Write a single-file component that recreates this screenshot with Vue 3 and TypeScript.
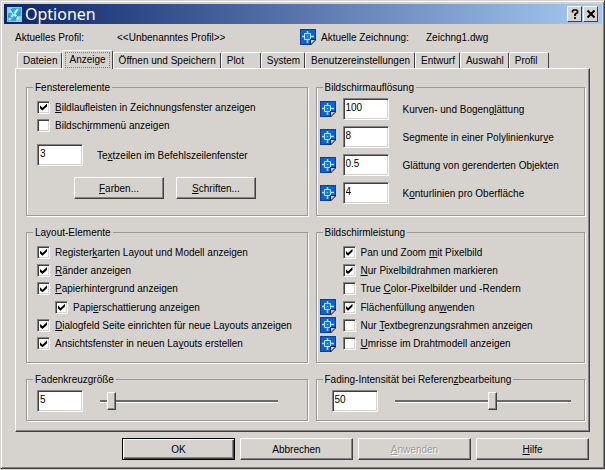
<script setup lang="ts">
import { h, ref, type FunctionalComponent } from 'vue'

interface CheckItem {
  id: string
  text: string
  checked: boolean
  nested?: boolean
  drawing?: boolean
}

interface NumberItem {
  id: string
  text: string
  value: string
}

/* Renders a caption; the letter after "&" is the underlined access key. */
const Caption: FunctionalComponent<{ text: string }> = (props) => {
  const at = props.text.indexOf('&')
  if (at < 0) return h('span', props.text)
  return h('span', [props.text.slice(0, at), h('u', props.text[at + 1]), props.text.slice(at + 2)])
}
Caption.props = ['text']

/* Marks a setting that is stored with the drawing. */
const DrawingIcon: FunctionalComponent = () =>
  h('svg', { width: 16, height: 16, viewBox: '0 0 16 16', 'aria-hidden': 'true' }, [
    h('path', { d: 'M0 0h16v11l-5 5H0z', fill: '#0b62d6' }),
    h('path', { d: 'M.5 0v15.5H11M0 .5h15.5V11', fill: 'none', stroke: '#0a3f9e' }),
    h('path', { d: 'M7.5 2v2M7.5 11v3M2 7.500h2M11 7.500h3', fill: 'none', stroke: '#a8e4ff', 'stroke-width': 1.5 }),
    h('path', { d: 'M4.500 4.500h6v6h-6z', fill: '#0e7cf0', stroke: '#b4ebff' }),
    h('path', { d: 'M7 7h1v1H7z', fill: '#9fdcff' }),
    h('path', { d: 'M10.500 16v-5.500H16z', fill: '#c4cad2', stroke: '#10203c' }),
  ])

const tabs = ['Dateien', 'Anzeige', 'Öffnen und Speichern', 'Plot', 'System', 'Benutzereinstellungen', 'Entwurf', 'Auswahl', 'Profil']
const activeTab = ref('Anzeige')

const windowChecks = ref<CheckItem[]>([
  { id: 'scrollbars', text: '&Bildlaufleisten in Zeichnungsfenster anzeigen', checked: true },
  { id: 'screenmenu', text: 'Bildsch&irmmenü anzeigen', checked: false },
])
const commandLines = ref('3')

const resolution = ref<NumberItem[]>([
  { id: 'arcs', text: 'Kurven- und Bogeng&lättung', value: '100' },
  { id: 'segments', text: 'Segmente in einer Polylinienkur&ve', value: '8' },
  { id: 'smoothness', text: 'Glättung von gerenderten Ob&jekten', value: '0.5' },
  { id: 'contours', text: 'K&onturlinien pro Oberfläche', value: '4' },
])

const layoutChecks = ref<CheckItem[]>([
  { id: 'layouttabs', text: 'Register&karten Layout und Modell anzeigen', checked: true },
  { id: 'margins', text: '&Ränder anzeigen', checked: true },
  { id: 'paper', text: '&Papierhintergrund anzeigen', checked: true },
  { id: 'shadow', text: 'Papi&erschattierung anzeigen', checked: true, nested: true },
  { id: 'pagesetup', text: '&Dialogfeld Seite einrichten für neue Layouts anzeigen', checked: true },
  { id: 'viewport', text: 'Ansichtsfenster in neuen La&youts erstellen', checked: true },
])

const performanceChecks = ref<CheckItem[]>([
  { id: 'panzoom', text: 'Pan und Zoom &mit Pixelbild', checked: true },
  { id: 'frames', text: '&Nur Pixelbildrahmen markieren', checked: true },
  { id: 'truecolor', text: 'True &Color-Pixelbilder und -Rendern', checked: false },
  { id: 'fill', text: 'Flächenfüllung an&wenden', checked: true, drawing: true },
  { id: 'textframe', text: 'Nur &Textbegrenzungsrahmen anzeigen', checked: false, drawing: true },
  { id: 'silhouettes', text: '&Umrisse im Drahtmodell anzeigen', checked: false, drawing: true },
])

const crosshair = ref(5)
const fading = ref(50)
</script>

<template>
  <main class="dialog">
    <header class="titlebar">
      <svg class="app-icon" width="15" height="15" viewBox="0 0 15 15" aria-hidden="true">
        <path d="M0 0h15v15H0z" fill="#36a9d8" />
        <path d="M0 0h5v6H0zM9 9h6v6H9z" fill="#7fd4e8" />
        <path d="M2 13L11 2M3 3l9 9" fill="none" stroke="#b9ecef" stroke-width="2" />
        <path d="M4 2l3 5M8 12l5-7M1 9l4 2" fill="none" stroke="#1a7cae" />
        <path d="M.5.5h14v14H.5z" fill="none" stroke="#8cc9df" />
      </svg>
      <h1>Optionen</h1>
      <button class="caption-button" type="button" aria-label="Hilfe zum Dialog">
        <svg width="12" height="12" viewBox="0 0 12 12"><path d="M3.500 4.500V3L4.500 2h3L8.500 3v1.500L6 6.500V8M6 9v2" fill="none" stroke="#000" stroke-width="1.700" /></svg>
      </button>
      <button class="caption-button" type="button" aria-label="Schließen">
        <svg width="12" height="12" viewBox="0 0 12 12"><path d="M2.500 2.500l7 7M9.500 2.500l-7 7" fill="none" stroke="#000" stroke-width="2" /></svg>
      </button>
    </header>

    <div class="profile">
      <span class="profile-label">Aktuelles Profil:</span>
      <span class="profile-name">&lt;&lt;Unbenanntes Profil&gt;&gt;</span>
      <DrawingIcon />
      <span class="drawing-label">Aktuelle Zeichnung:</span>
      <span>Zeichng1.dwg</span>
    </div>

    <div class="tabs" role="tablist">
      <button
        v-for="tab in tabs"
        :key="tab"
        type="button"
        role="tab"
        class="tab"
        :class="{ active: tab === activeTab }"
        :aria-selected="tab === activeTab"
        @click="activeTab = tab"
      ><span>{{ tab }}</span></button>
    </div>

    <section class="panel" role="tabpanel">
      <fieldset>
        <legend>Fensterelemente</legend>
        <div class="checks pair">
          <div v-for="item in windowChecks" :key="item.id" class="check">
            <input :id="item.id" v-model="item.checked" type="checkbox" />
            <label :for="item.id"><Caption :text="item.text" /></label>
          </div>
        </div>
        <div class="lines">
          <input id="lines" v-model="commandLines" class="field" type="text" />
          <label for="lines"><Caption text="Te&xtzeilen im Befehlszeilenfenster" /></label>
        </div>
        <div class="inner-buttons">
          <button class="push colors" type="button"><Caption text="&Farben..." /></button>
          <button class="push fonts" type="button"><Caption text="&Schriften..." /></button>
        </div>
      </fieldset>

      <fieldset>
        <legend>Bildschirmauflösung</legend>
        <div class="numbers">
          <div v-for="item in resolution" :key="item.id" class="number">
            <DrawingIcon />
            <input :id="item.id" v-model="item.value" class="field" type="text" />
            <label :for="item.id"><Caption :text="item.text" /></label>
          </div>
        </div>
      </fieldset>

      <fieldset>
        <legend>Layout-Elemente</legend>
        <div class="checks">
          <div v-for="item in layoutChecks" :key="item.id" class="check" :class="{ nested: item.nested }">
            <input :id="item.id" v-model="item.checked" type="checkbox" />
            <label :for="item.id"><Caption :text="item.text" /></label>
          </div>
        </div>
      </fieldset>

      <fieldset>
        <legend>Bildschirmleistung</legend>
        <div class="checks marked">
          <div v-for="item in performanceChecks" :key="item.id" class="check">
            <span class="mark"><DrawingIcon v-if="item.drawing" /></span>
            <input :id="item.id" v-model="item.checked" type="checkbox" />
            <label :for="item.id"><Caption :text="item.text" /></label>
          </div>
        </div>
      </fieldset>

      <fieldset>
        <legend id="crosshair-title">Fadenkreuzgröße</legend>
        <div class="slider-row">
          <input v-model="crosshair" class="field" type="text" aria-labelledby="crosshair-title" />
          <input v-model="crosshair" class="slider" type="range" min="1" max="100" aria-labelledby="crosshair-title" />
        </div>
      </fieldset>

      <fieldset>
        <legend id="fading-title"><Caption text="Fading-Intensität bei Referen&zbearbeitung" /></legend>
        <div class="slider-row right">
          <input v-model="fading" class="field" type="text" aria-labelledby="fading-title" />
          <input v-model="fading" class="slider" type="range" min="0" max="90" aria-labelledby="fading-title" />
        </div>
      </fieldset>
    </section>

    <footer class="actions">
      <button class="push default" type="button">OK</button>
      <button class="push" type="button">Abbrechen</button>
      <button class="push" type="button" disabled><Caption text="&Anwenden" /></button>
      <button class="push" type="button"><Caption text="&Hilfe" /></button>
    </footer>
  </main>
</template>

<style>
body {
  background: #d6d3ce;
}
</style>

<style scoped>
.dialog {
  box-sizing: border-box;
  padding: 3px 2px 8px;
  border: 1px solid;
  border-color: #d6d3ce #404040 #404040 #d6d3ce;
  box-shadow: inset 1px 1px #fff, inset -1px -1px #848284;
  background: #d6d3ce;
  color: #000;
  font: 10px/13px "Liberation Sans", Arial, sans-serif;
  white-space: nowrap;
}

button,
input {
  box-sizing: border-box;
  margin: 0;
  font: inherit;
  color: inherit;
}

svg {
  display: block;
  flex: none;
}

.titlebar {
  display: flex;
  align-items: center;
  height: 20px;
  margin-left: 1px;
  padding: 0 4px 0 3px;
  background: linear-gradient(90deg, #0c246a, #a6caf0);
}

.titlebar h1 {
  flex: 1;
  margin: 0 0 0 3px;
  color: #fff;
  font: 16px/20px "Noto Sans", Tahoma, sans-serif;
}

.caption-button {
  display: grid;
  place-items: center;
  width: 15px;
  height: 16px;
  padding: 0;
  border: 1px solid;
  border-color: #fff #404040 #404040 #fff;
  background: #d6d3ce;
}

.caption-button + .caption-button {
  margin-left: 1px;
}

.profile {
  display: flex;
  align-items: center;
  height: 26px;
  padding-left: 12px;
}

.profile-label {
  width: 102px;
}

.profile-name {
  width: 183px;
}

.drawing-label {
  width: 105px;
  margin-left: 5px;
}

.tabs {
  display: flex;
  align-items: flex-end;
  height: 18px;
  padding-left: 14px;
}

.tab {
  height: 16px;
  min-width: 40px;
  padding: 0 4px 0 5px;
  border: 0 solid;
  border-width: 1px 1px 0 1px;
  border-color: #fff #404040 #fff #fff;
  border-radius: 2px 2px 0 0;
  background: #d6d3ce;
  text-align: left;
  white-space: nowrap;
}

.tab.active {
  position: relative;
  height: 19px;
  margin-bottom: -1px;
  padding: 0 2px;
}

.tab.active span {
  display: block;
  padding: 0 3px 1px;
  border: 1px dotted #808080;
}

.panel {
  display: grid;
  grid-template-columns: 281fr 269fr;
  gap: 10px 8px;
  margin: 0 12px;
  padding: 12px 4px 10px 10px;
  border: 1px solid;
  border-color: #fff #404040 #404040 #fff;
  box-shadow: inset -1px -1px #848284;
}

fieldset {
  min-width: 0;
  margin: 0;
  padding: 0 0 0 10px;
  border: 1px solid #9a9894;
  box-shadow: 1px 1px #fff, inset 1px 0 #fff;
}

legend {
  margin-left: -4px;
  padding: 0 2px;
  background: #d6d3ce;
}

.checks {
  display: grid;
  grid-auto-rows: 1fr;
  height: 110px;
  padding: 4px 0 9px;
}

.checks.pair {
  height: 36px;
  padding-bottom: 0;
}

.check {
  display: flex;
  align-items: center;
  gap: 5px;
}

.check.nested {
  padding-left: 18px;
}

.check input {
  display: grid;
  place-items: center;
  flex: none;
  width: 13px;
  height: 13px;
  appearance: none;
  border: 1px solid;
  border-color: #848284 #fff #fff #848284;
  background: #fff;
  box-shadow: inset 1px 1px #404040, inset -1px -1px #d6d3ce;
}

.check input:checked::before {
  content: "";
  width: 7px;
  height: 7px;
  background: #000;
  clip-path: polygon(0 28%, 36% 62%, 100% 0, 100% 42%, 36% 100%, 0 70%);
}

.field {
  flex: none;
  width: 46px;
  height: 22px;
  padding: 0 2px 4px;
  border: 1px solid;
  border-color: #848284 #fff #fff #848284;
  background: #fff;
  box-shadow: inset 1px 1px #404040, inset -1px -1px #d6d3ce;
  outline: none;
}

.lines {
  display: flex;
  align-items: center;
  gap: 14px;
  padding-top: 10px;
}

.push {
  height: 22px;
  padding: 0;
  border: 1px solid;
  border-color: #fff #404040 #404040 #fff;
  background: #d6d3ce;
  box-shadow: inset -1px -1px #848284;
}

.push:disabled {
  color: #9c9a96;
  text-shadow: 1px 1px #fff;
}

.push.default {
  border-color: #000;
  box-shadow: inset 1px 1px #fff, inset -1px -1px #404040, inset -2px -2px #848284;
}

.inner-buttons {
  display: flex;
  gap: 12px;
  padding: 11px 0 16px 37px;
}

.colors {
  width: 90px;
}

.fonts {
  width: 80px;
}

.numbers {
  display: grid;
  gap: 6px;
  margin-left: -7px;
  padding-top: 4px;
}

.number {
  display: flex;
  align-items: center;
}

.number .field {
  margin: 0 14px 0 7px;
}

.marked {
  margin-left: -7px;
}

.mark {
  width: 18px;
}

.slider-row {
  display: flex;
  align-items: center;
  gap: 17px;
  padding: 4px 29px 8px 0;
}

.slider-row.right {
  padding: 4px 13px 8px 5px;
}

.slider {
  flex: 1;
  min-width: 0;
  height: 18px;
  appearance: none;
  background: none;
}

.slider::-webkit-slider-runnable-track {
  height: 3px;
  border-bottom: 1px solid #fff;
  background: #6b6966;
}

.slider::-webkit-slider-thumb {
  appearance: none;
  width: 9px;
  height: 18px;
  margin-top: -8px;
  border: 1px solid;
  border-color: #fff #404040 #404040 #fff;
  background: #d6d3ce;
  box-shadow: inset -1px -1px #848284;
}

.actions {
  display: grid;
  grid-template-columns: repeat(4, 1fr);
  gap: 5px;
  padding: 6px 13px 0 119px;
}
</style>
